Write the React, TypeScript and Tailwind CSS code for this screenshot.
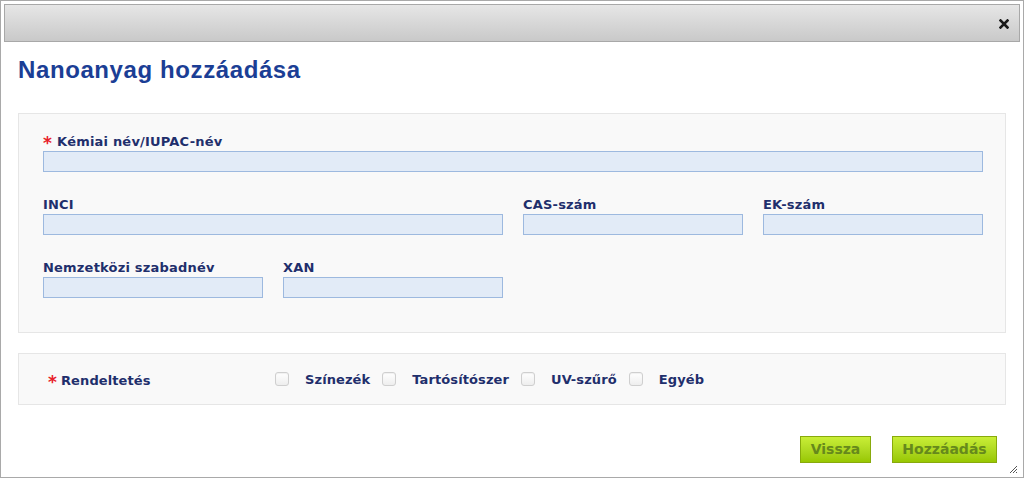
import React from "react";

const labelCls =
  "flex items-end h-[16px] font-['DejaVu_Sans',Verdana,sans-serif] font-bold text-[13px] tracking-[0.2px] leading-[16px] text-[#1f2f6c] mb-[1px] whitespace-nowrap";
const inputCls =
  "block w-full h-[21px] bg-[#e2ebf7] border border-[#9db9df] outline-none";

function Field({ label, required, span2 }: { label: string; required?: boolean; span2?: boolean }) {
  return (
    <div className={span2 ? "col-span-2" : ""}>
      <label className={labelCls}>
        {required && (
          <span className="text-[#e8202a] text-[17px] leading-[16px] h-[16px] mr-[5px] relative top-[1px]">*</span>
        )}
        <span className="h-[16px]">{label}</span>
      </label>
      <input className={inputCls} />
    </div>
  );
}

function Check({ label }: { label: string }) {
  return (
    <label className="flex items-center">
      <span className="w-[14px] h-[14px] rounded-[3px] border border-[#cfcfcf] bg-gradient-to-b from-[#ffffff] to-[#eeeeee] shadow-[inset_0_1px_1px_rgba(0,0,0,0.06)]" />
      <span className="ml-[16px] mr-[12px] relative top-[1px] font-['DejaVu_Sans',Verdana,sans-serif] font-bold text-[13px] tracking-[0.1px] leading-[16px] text-[#1f2f6c]">
        {label}
      </span>
    </label>
  );
}

export default function App() {
  return (
    <div className="w-[1024px] h-[478px] bg-white border border-[#a9a9a9] p-[3px] flex flex-col relative overflow-hidden">
      <div className="h-[38px] shrink-0 border border-[#a8a8a8] bg-gradient-to-b from-[#e6e6e6] to-[#c9c9c9] flex items-center justify-end pr-[10px]">
        <svg width="10" height="10" viewBox="0 0 10 10" className="mt-[1px]">
          <path d="M1.5 1.5 L8.5 8.5 M8.5 1.5 L1.5 8.5" stroke="#1a1a1a" strokeWidth="2.6" strokeLinecap="square" />
        </svg>
      </div>

      <div className="flex-1 flex flex-col px-[14px]">
        <h1 className="mt-[14px] font-['Liberation_Sans',Arial,sans-serif] font-bold text-[24px] tracking-[0.6px] leading-[28px] text-[#1b3e95]">
          Nanoanyag hozzáadása
        </h1>

        <div className="mt-[29px] h-[220px] border border-[#e6e6e6] bg-[#f9f9f9] pt-[20px] pl-[24px] pr-[23px]">
          <div className="grid grid-cols-[220px_220px_220px_220px] gap-x-[20px] gap-y-[25px] w-[940px]">
            <div className="col-span-4">
              <Field label="Kémiai név/IUPAC-név" required />
            </div>
            <Field label="INCI" span2 />
            <Field label="CAS-szám" />
            <Field label="EK-szám" />
            <Field label="Nemzetközi szabadnév" />
            <Field label="XAN" />
          </div>
        </div>

        <div className="mt-[20px] h-[52px] border border-[#e6e6e6] bg-[#f9f9f9] flex items-center pl-[29px]">
          <div className="w-[227px] flex items-end h-[16px] relative top-[2px] font-['DejaVu_Sans',Verdana,sans-serif] font-bold text-[13px] tracking-[0.1px] leading-[16px] text-[#1f2f6c] whitespace-nowrap">
            <span className="text-[#e8202a] text-[17px] leading-[16px] h-[16px] mr-[4px] relative top-[1px]">*</span>
            <span className="h-[16px]">Rendeltetés</span>
          </div>
          <div className="flex items-center">
            <Check label="Színezék" />
            <Check label="Tartósítószer" />
            <Check label="UV-szűrő" />
            <Check label="Egyéb" />
          </div>
        </div>

        <div className="mt-[31px] flex justify-end gap-[21px] pr-[9px]">
          <button className="h-[27px] w-[71px] border border-[#88aa0c] bg-gradient-to-b from-[#c9ee36] to-[#98c700] font-['DejaVu_Sans',Verdana,sans-serif] font-bold text-[14px] text-[#66891c]">
            Vissza
          </button>
          <button className="h-[27px] w-[105px] border border-[#88aa0c] bg-gradient-to-b from-[#c9ee36] to-[#98c700] font-['DejaVu_Sans',Verdana,sans-serif] font-bold text-[14px] text-[#66891c]">
            Hozzáadás
          </button>
        </div>
      </div>

      <svg width="10" height="10" viewBox="0 0 10 10" className="absolute right-[5px] bottom-[3px]">
        <path d="M9 2 L2 9 M9 5 L5 9 M9 8 L8 9" stroke="#555" strokeWidth="1" />
      </svg>
    </div>
  );
}
